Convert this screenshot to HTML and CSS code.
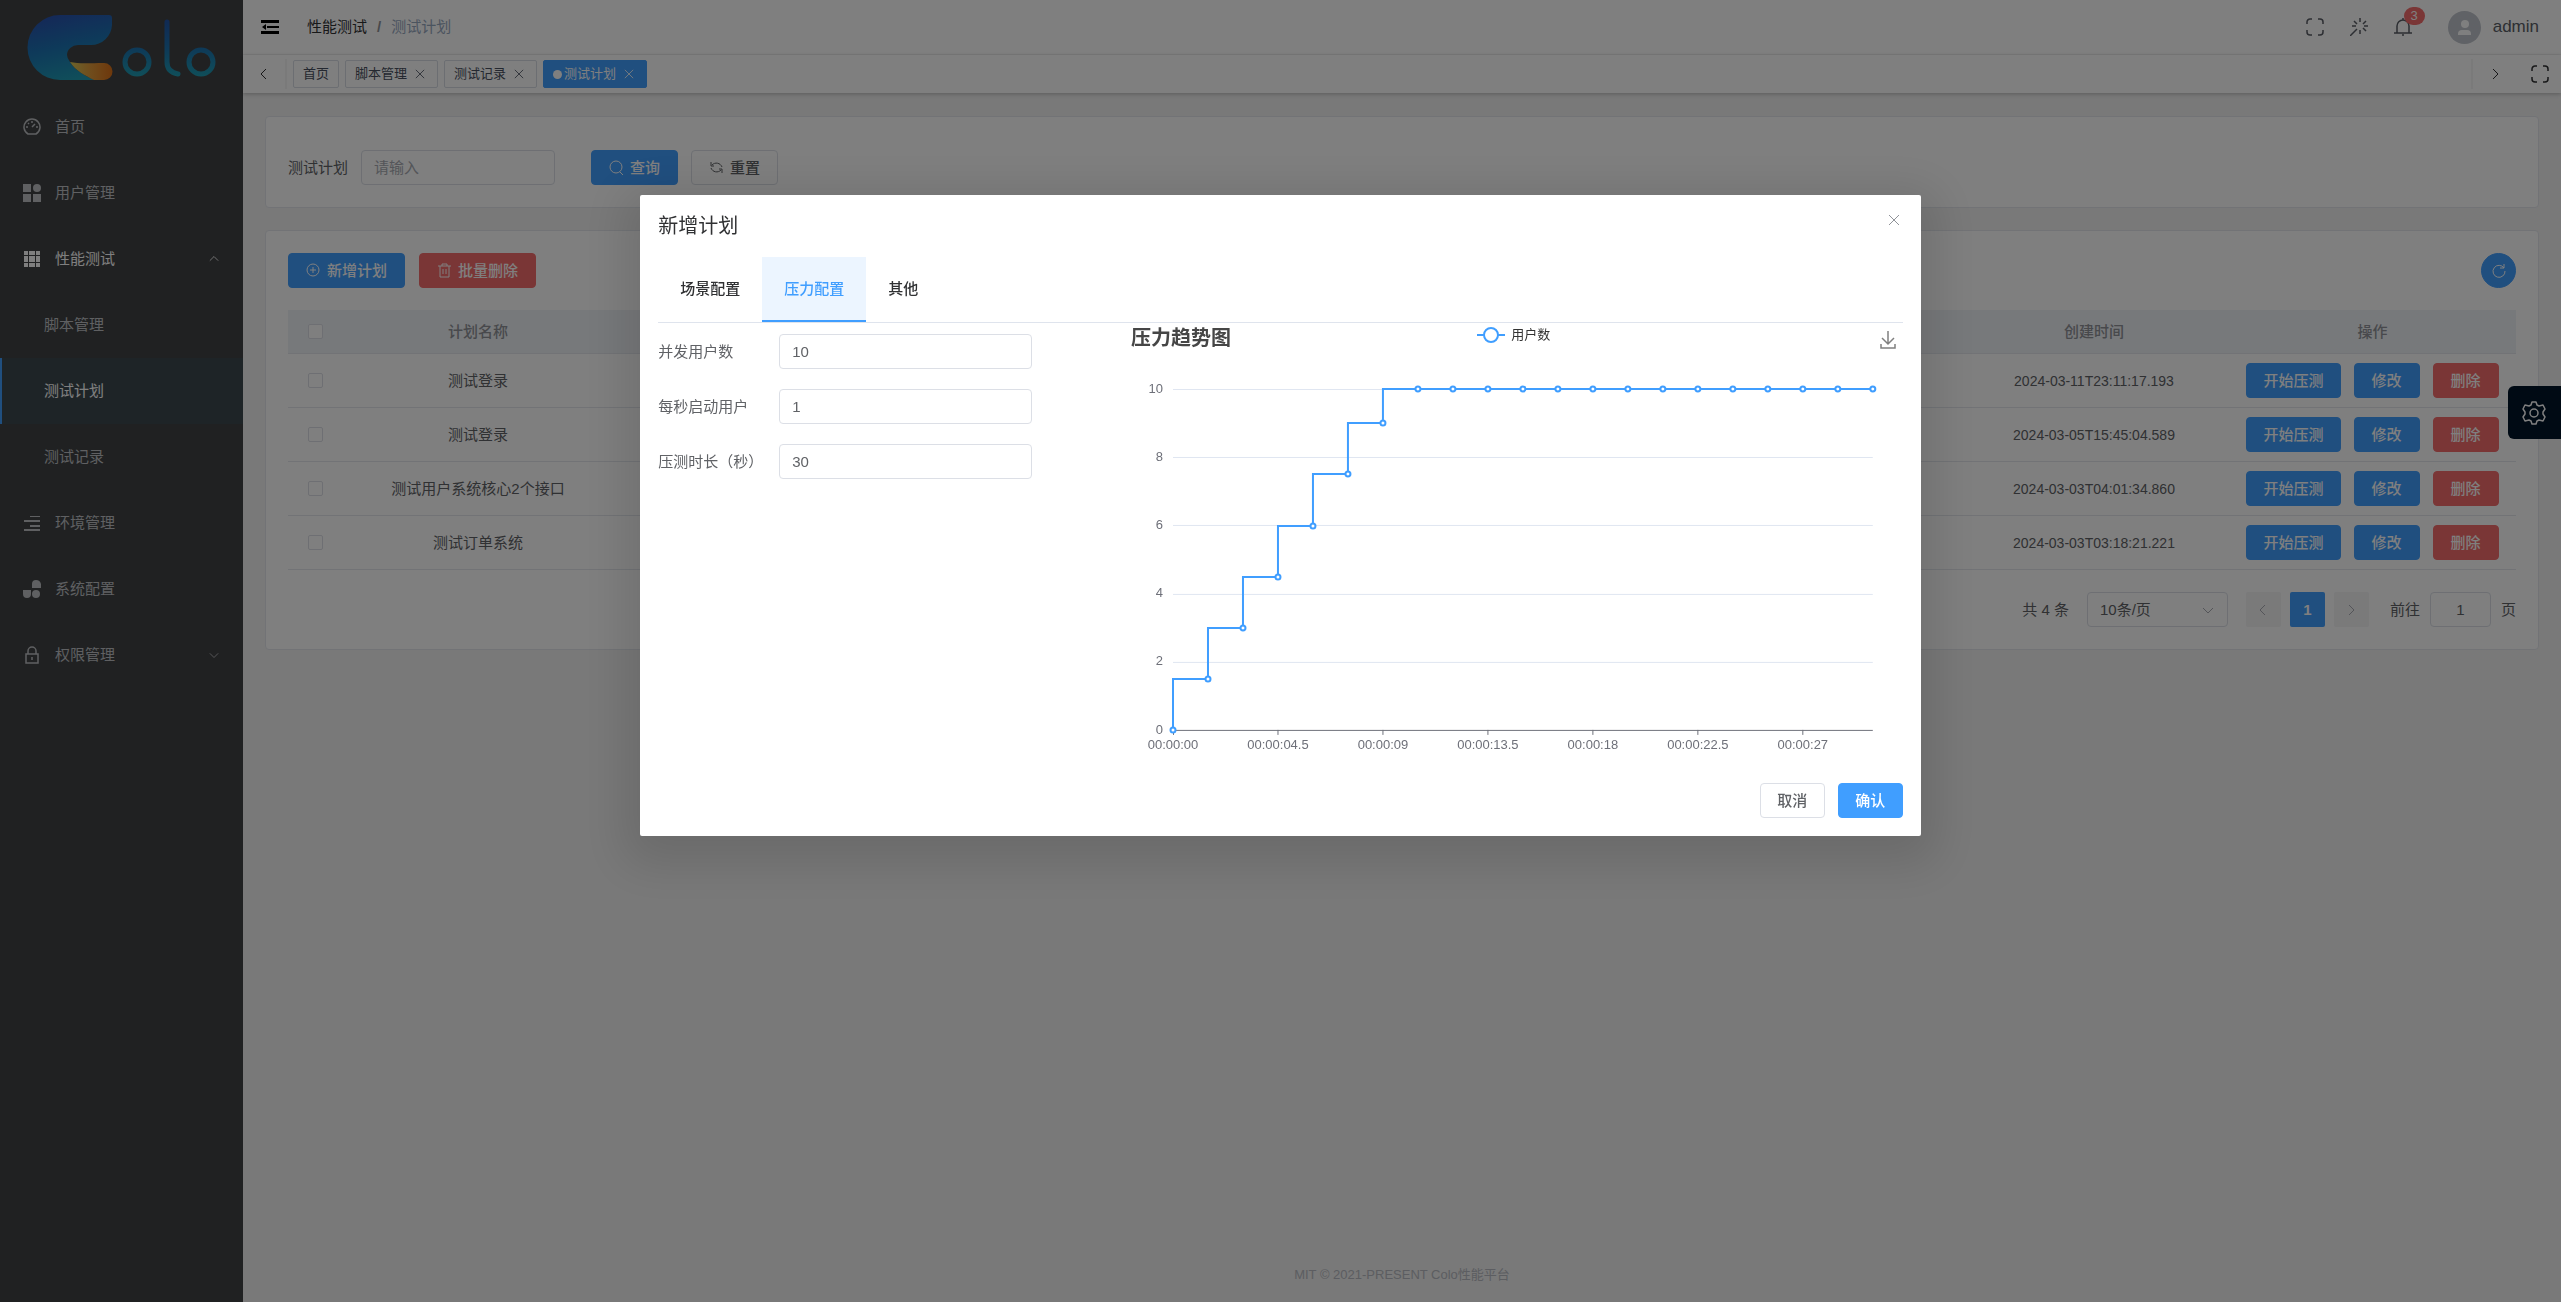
FILE: index.html
```html
<!DOCTYPE html>
<html lang="zh-CN">
<head>
<meta charset="utf-8">
<title>测试计划 - Colo性能平台</title>
<link rel="stylesheet" href="styles.css">
</head>
<body>
<svg class="sprite" aria-hidden="true">
  <symbol id="i-full" viewBox="0 0 18 18"><path d="M1 6V4a3 3 0 0 1 3-3h2M12 1h2a3 3 0 0 1 3 3v2M17 12v2a3 3 0 0 1-3 3h-2M6 17H4a3 3 0 0 1-3-3v-2"/></symbol>
  <symbol id="i-close" viewBox="0 0 12 12"><path d="M1 1l10 10M11 1L1 11"/></symbol>
  <symbol id="i-left" viewBox="0 0 12 12"><path d="M8 1L3 6l5 5"/></symbol>
  <symbol id="i-right" viewBox="0 0 12 12"><path d="M4 1l5 5-5 5"/></symbol>
  <symbol id="i-down" viewBox="0 0 12 12"><path d="M1 4l5 5 5-5"/></symbol>
  <symbol id="i-up" viewBox="0 0 12 12"><path d="M1 8l5-5 5 5"/></symbol>
</svg>
<div class="app">
  <aside class="sidebar">
    <svg class="logo" viewBox="0 0 243 94" role="img" aria-label="Colo">
      <defs>
        <linearGradient id="g1" x1="0.2" y1="0" x2="0.5" y2="1"><stop offset="0" stop-color="#2a50b0"/><stop offset="0.5" stop-color="#1c74b4"/><stop offset="1" stop-color="#209cb4"/></linearGradient>
        <linearGradient id="g2"><stop offset="0" stop-color="#d8c858"/><stop offset="0.5" stop-color="#e09838"/><stop offset="1" stop-color="#dc7018"/></linearGradient>
        <linearGradient id="g3" gradientUnits="userSpaceOnUse" x1="0" y1="20" x2="0" y2="78"><stop offset="0" stop-color="#2054a8"/><stop offset="0.5" stop-color="#1c74b0"/><stop offset="1" stop-color="#20a0b4"/></linearGradient>
      </defs>
      <path fill="url(#g1)" d="M112 18q0-3-3-3H60a32 32 0 0 0 0 65h35C85 76 75 70 70 62q-3-4-3-7a11 10 0 0 1 11-10h13a21 21 0 0 0 21-20z"/>
      <path fill="url(#g2)" d="M70 62c9 2 20 1 34 1a8 8 0 0 1 0 17H94C84 75 76 71 70 62z"/>
      <g fill="none" stroke="url(#g3)" stroke-width="5" stroke-linecap="round"><circle cx="137" cy="62" r="12"/><path d="M167 22v40q0 10 11 12"/><circle cx="201" cy="62" r="12"/></g>
    </svg>
    <nav class="menu">
      <a class="item" href="#"><svg class="mi line" viewBox="0 0 18 18"><path d="M5 16a8 8 0 1 1 8 0zM9 9l3-3M9 3v2M3 9h2M13 9h2M5 5l1 1"/></svg>首页</a>
      <a class="item" href="#"><svg class="mi" viewBox="0 0 18 18"><path d="M0 0h8v8H0zM0 10h8v8H0zM10 10h8v8h-8z"/><circle cx="14" cy="4" r="4"/></svg>用户管理</a>
      <a class="item open" href="#"><svg class="mi" viewBox="0 0 18 18"><path d="M1 1h4v4H1zM6 1h6v4H6zM13 1h4v4h-4zM1 6h4v6H1zM6 6h6v6H6zM13 6h4v6h-4zM1 13h4v4H1zM6 13h6v4H6zM13 13h4v4h-4z"/></svg>性能测试<svg class="arrow"><use href="#i-up"/></svg></a>
      <a class="item sub" href="#">脚本管理</a>
      <a class="item sub active" href="#">测试计划</a>
      <a class="item sub" href="#">测试记录</a>
      <a class="item" href="#"><svg class="mi" viewBox="0 0 18 18"><path d="M7 2h10v1H7zM1 6h16v2H1zM7 11h10v2H7zM1 15h16v2H1z"/></svg>环境管理</a>
      <a class="item" href="#"><svg class="mi" viewBox="0 0 18 18"><path d="M9 8V4q0-4 4-4t5 4v4zM0 10h8v4q0 4-4 4t-4-4z"/><circle cx="13" cy="14" r="4"/></svg>系统配置</a>
      <a class="item" href="#"><svg class="mi line" viewBox="0 0 18 18"><path d="M3 8h12v9H3zM5 8V5a4 4 0 0 1 8 0v3M9 11v3"/></svg>权限管理<svg class="arrow"><use href="#i-down"/></svg></a>
    </nav>
  </aside>

  <div class="page">
    <header class="topbar">
      <button class="plain" aria-label="折叠菜单"><svg class="fold" viewBox="0 0 18 14"><path d="M0 0h18v3H0zM6 6h12v2H6zM0 11h18v3H0zM5 4v6L1 7z"/></svg></button>
      <nav class="crumbs"><a href="#">性能测试</a><span class="slash">/</span><span class="here">测试计划</span></nav>
      <div class="tools">
        <button class="plain" aria-label="全屏"><svg class="ic18"><use href="#i-full"/></svg></button>
        <button class="plain" aria-label="主题"><svg class="ic18" viewBox="0 0 18 18"><path d="M10 0v4M10 12v4M2 8h4M14 8h4M4 3l3 3M16 3l-3 3M13 10l3 3M7 11l-7 7"/></svg></button>
        <button class="plain bell" aria-label="通知"><svg class="ic18" viewBox="0 0 18 18"><path d="M0 15h18M3 15V8a6 6 0 0 1 12 0v7M8 17h2M9 0v2"/></svg><span class="badge">3</span></button>
        <button class="plain user"><svg class="avatar" viewBox="0 0 33 33"><circle cx="16.500" cy="16.500" r="16.500" fill="#c0c4cc"/><circle cx="17" cy="13" r="4" fill="#fff"/><path fill="#fff" d="M10 24v-1q0-4 4-4h5q4 0 4 4v1z"/></svg>admin</button>
      </div>
    </header>
    <div class="tagbar">
      <button class="plain edge" aria-label="向左"><svg class="ic12"><use href="#i-left"/></svg></button>
      <div class="tags">
        <a class="tag" href="#">首页</a>
        <a class="tag" href="#">脚本管理<svg class="x"><use href="#i-close"/></svg></a>
        <a class="tag" href="#">测试记录<svg class="x"><use href="#i-close"/></svg></a>
        <a class="tag on" href="#"><i class="dot"></i>测试计划<svg class="x"><use href="#i-close"/></svg></a>
      </div>
      <button class="plain edge right" aria-label="向右"><svg class="ic12"><use href="#i-right"/></svg></button>
      <button class="plain last" aria-label="内容全屏"><svg class="ic18"><use href="#i-full"/></svg></button>
    </div>

    <main class="content">
      <form class="card search">
        <label for="q">测试计划</label>
        <input class="input" id="q" type="text" placeholder="请输入">
        <div class="btns">
          <button class="btn primary" type="button"><svg viewBox="0 0 15 15"><circle cx="7" cy="7" r="6"/><path d="M11 12l3 3"/></svg>查询</button>
          <button class="btn" type="button"><svg viewBox="0 0 15 15"><path d="M3 5a6 6 0 0 1 10 2M2 2v4h3M12 10a6 6 0 0 1-10-2M13 13V9h-3"/></svg>重置</button>
        </div>
      </form>

      <section class="card list">
        <div class="bar">
          <button class="btn primary"><svg viewBox="0 0 15 15"><circle cx="7" cy="7" r="6"/><path d="M7 4v6M4 7h6"/></svg>新增计划</button>
          <button class="btn danger"><svg viewBox="0 0 15 15"><path d="M1 3h13M5 3V1h5v2M3 3v11h9V3M6 6v5M9 6v5"/></svg>批量删除</button>
          <button class="btn primary round" aria-label="刷新"><svg viewBox="0 0 15 15"><path d="M13 5a6 6 0 1 0 1 3M13 1v4h-4"/></svg></button>
        </div>
        <table>
          <colgroup><col class="c-check"><col class="c-text"><col><col class="c-text"><col class="c-ops"></colgroup>
          <thead><tr><th><input type="checkbox" aria-label="全选"></th><th>计划名称</th><th></th><th>创建时间</th><th>操作</th></tr></thead>
          <tbody>
            <tr><td><input type="checkbox" aria-label="选择"></td><td>测试登录</td><td></td><td class="time">2024-03-11T23:11:17.193</td><td><div class="ops"><button class="btn primary">开始压测</button><button class="btn primary">修改</button><button class="btn danger">删除</button></div></td></tr>
            <tr><td><input type="checkbox" aria-label="选择"></td><td>测试登录</td><td></td><td class="time">2024-03-05T15:45:04.589</td><td><div class="ops"><button class="btn primary">开始压测</button><button class="btn primary">修改</button><button class="btn danger">删除</button></div></td></tr>
            <tr><td><input type="checkbox" aria-label="选择"></td><td>测试用户系统核心2个接口</td><td></td><td class="time">2024-03-03T04:01:34.860</td><td><div class="ops"><button class="btn primary">开始压测</button><button class="btn primary">修改</button><button class="btn danger">删除</button></div></td></tr>
            <tr><td><input type="checkbox" aria-label="选择"></td><td>测试订单系统</td><td></td><td class="time">2024-03-03T03:18:21.221</td><td><div class="ops"><button class="btn primary">开始压测</button><button class="btn primary">修改</button><button class="btn danger">删除</button></div></td></tr>
          </tbody>
        </table>
        <div class="pager">
          <span>共 4 条</span>
          <span class="pick"><select class="input" aria-label="每页条数"><option>10条/页</option></select><svg class="ic12"><use href="#i-down"/></svg></span>
          <div class="pages">
            <button class="pg" disabled aria-label="上一页"><svg class="ic12"><use href="#i-left"/></svg></button>
            <button class="pg cur">1</button>
            <button class="pg" disabled aria-label="下一页"><svg class="ic12"><use href="#i-right"/></svg></button>
          </div>
          <div class="jump"><label for="goto">前往</label><input class="input" id="goto" type="text" value="1"><span>页</span></div>
        </div>
      </section>
    </main>
    <footer>MIT © 2021-PRESENT Colo性能平台</footer>
  </div>
  <button class="setting" aria-label="系统设置"><svg viewBox="0 0 24 24"><path d="M9 4l1-3h4l1 3 2 1 4-1 2 4-2 3v2l2 3-2 4-4-1-2 1-1 3h-4l-1-3-2-1-4 1-2-4 2-3v-2L1 8l2-4 4 1z"/><circle cx="12" cy="12" r="4"/></svg></button>
</div>

<div class="overlay">
  <section class="dialog" role="dialog" aria-modal="true" aria-labelledby="dlg">
    <header class="dhead"><h2 id="dlg">新增计划</h2><button class="plain" aria-label="关闭"><svg class="ic12"><use href="#i-close"/></svg></button></header>
    <div class="tabs" role="tablist">
      <button class="tab" role="tab">场景配置</button>
      <button class="tab sel" role="tab" aria-selected="true">压力配置</button>
      <button class="tab" role="tab">其他</button>
    </div>
    <div class="dbody">
      <form class="fields">
        <label for="f1">并发用户数</label><input class="input" id="f1" type="text" value="10">
        <label for="f2">每秒启动用户</label><input class="input" id="f2" type="text" value="1">
        <label for="f3">压测时长（秒）</label><input class="input" id="f3" type="text" value="30">
      </form>
      <figure class="chart">
        <figcaption>
          <h3>压力趋势图</h3>
          <span class="legend"><svg viewBox="0 0 28 16"><path d="M0 8h28"/><circle cx="14" cy="8" r="7"/></svg>用户数</span>
          <button class="plain save" aria-label="下载"><svg viewBox="0 0 16 18"><path d="M8 0v13M2 7l6 6 6-6M1 13v4h14v-4"/></svg></button>
        </figcaption>
        <svg class="plot" viewBox="0 0 778 392">
          <g class="grid"><path d="M48 27.500H748M48 95.500H748M48 163.500H748M48 232.500H748M48 300.500H748"/></g>
          <path class="axis" d="M48 368.500H748M48.500 368v5M153 368v5M258 368v5M363 368v5M468 368v5M573 368v5M678 368v5"/>
          <g class="ylab"><text x="38" y="31">10</text><text x="38" y="99">8</text><text x="38" y="167">6</text><text x="38" y="235">4</text><text x="38" y="303">2</text><text x="38" y="372">0</text></g>
          <g class="xlab"><text x="48" y="387">00:00:00</text><text x="153" y="387">00:00:04.5</text><text x="258" y="387">00:00:09</text><text x="363" y="387">00:00:13.5</text><text x="468" y="387">00:00:18</text><text x="573" y="387">00:00:22.5</text><text x="678" y="387">00:00:27</text></g>
          <path class="serie" d="M48 368V317H83V266H118V215H153V164H188V112H223V61H258V27H748"/>
          <g class="dots"><circle cx="48" cy="368" r="2.500"/><circle cx="83" cy="317" r="2.500"/><circle cx="118" cy="266" r="2.500"/><circle cx="153" cy="215" r="2.500"/><circle cx="188" cy="164" r="2.500"/><circle cx="223" cy="112" r="2.500"/><circle cx="258" cy="61" r="2.500"/><circle cx="293" cy="27" r="2.500"/><circle cx="328" cy="27" r="2.500"/><circle cx="363" cy="27" r="2.500"/><circle cx="398" cy="27" r="2.500"/><circle cx="433" cy="27" r="2.500"/><circle cx="468" cy="27" r="2.500"/><circle cx="503" cy="27" r="2.500"/><circle cx="538" cy="27" r="2.500"/><circle cx="573" cy="27" r="2.500"/><circle cx="608" cy="27" r="2.500"/><circle cx="643" cy="27" r="2.500"/><circle cx="678" cy="27" r="2.500"/><circle cx="713" cy="27" r="2.500"/><circle cx="748" cy="27" r="2.500"/></g>
        </svg>
      </figure>
    </div>
    <footer class="dfoot"><button class="btn">取消</button><button class="btn primary">确认</button></footer>
  </section>
</div>
</body>
</html>
```
FILE: styles.css
```css
* { box-sizing: border-box; }
body {
  margin: 0;
  font: 15px/20px "Liberation Sans", "Noto Sans CJK SC", sans-serif;
  color: #606266;
  background: #f2f2f2;
}
button, input, select { font: inherit; color: inherit; margin: 0; }
a { color: inherit; text-decoration: none; }
h2, h3, figure { margin: 0; }
svg { fill: none; stroke: currentColor; display: block; flex: none; }
.sprite { width: 0; height: 0; position: absolute; }
.plain { display: flex; align-items: center; background: none; border: 0; padding: 0; }
.ic12 { width: 12px; height: 12px; }
.ic18 { width: 18px; height: 18px; }

.app { display: grid; grid-template-columns: 243px minmax(0, 1fr); min-height: 100vh; }

/* sidebar */
.sidebar { background: #414345; color: #bfc1c4; }
.logo { width: 100%; stroke: none; }
.item { display: flex; align-items: center; height: 66px; padding: 0 24px 0 23px; gap: 14px; }
.item.open { color: #fff; }
.sub { padding-left: 44px; }
.sub.active { color: #fff; background: #3d494f; box-shadow: inset 2px 0 #409eff; }
.mi { width: 18px; height: 18px; fill: currentColor; stroke: none; }
.mi.line { fill: none; stroke: currentColor; stroke-width: 1.5; }
.arrow { width: 10px; height: 12px; margin-left: auto; }

/* top bar */
.page { display: flex; flex-direction: column; }
.topbar { display: flex; align-items: center; height: 55px; padding: 0 22px 0 18px; background: #fff; color: #303133; border-bottom: 1px solid #f6f6f6; }
.fold { width: 18px; height: 14px; fill: #000; stroke: none; }
.crumbs { display: flex; gap: 10px; margin-left: 28px; }
.slash { color: #909399; font-weight: bold; }
.here { color: #97a8be; }
.tools { display: flex; align-items: center; gap: 26px; margin-left: auto; color: #5a5e66; }
.tools .ic18 { stroke-width: 1.5; }
.bell { position: relative; }
.badge { position: absolute; left: 10px; top: -11px; width: 21px; height: 18px; border-radius: 9px; background: #f56c6c; color: #fff; font-size: 13px; line-height: 18px; text-align: center; }
.user { gap: 12px; margin-left: 10px; font-size: 17px; }
.avatar { width: 33px; height: 33px; stroke: none; }

/* visited pages */
.tagbar { display: flex; height: 38px; align-items: center; background: #fff; color: #303133; box-shadow: 0 1px 4px rgba(0, 0, 0, .25); position: relative; }
.tagbar .ic18 { stroke-width: 1.5; }
.edge { width: 44px; height: 30px; padding-left: 15px; border-right: 2px solid #f4f4f4; }
.edge.right { width: 60px; padding-left: 16px; border: 0; border-left: 2px solid #f4f4f4; }
.last { padding-right: 12px; }
.tags { display: flex; flex: 1; gap: 6px; padding-left: 6px; }
.tag { display: flex; align-items: center; height: 28px; padding: 0 9px; border: 1px solid #d8dce5; border-radius: 2px; font-size: 13px; color: #495060; background: #fff; }
.tag .x { width: 10px; height: 10px; margin: 0 3px 0 8px; }
.tag.on { background: #409eff; border-color: #409eff; color: #fff; }
.dot { width: 9px; height: 9px; margin-right: 2px; border-radius: 50%; background: #fff; }

/* content */
.content { display: flex; flex-direction: column; gap: 22px; padding: 23px 22px 22px; }
.card { background: #fff; border: 1px solid #e4e7ed; border-radius: 4px; padding: 22px; }
.search { display: flex; align-items: center; padding-top: 33px; }
.input { height: 35px; padding: 0 12px; border: 1px solid #dcdfe6; border-radius: 4px; background: #fff; outline: 0; min-width: 0; }
.input::placeholder { color: #a8abb2; }
.search .input { width: 194px; margin-left: 13px; }
.btns { display: flex; gap: 13px; margin-left: 36px; }
.btn { display: flex; align-items: center; justify-content: center; gap: 6px; height: 35px; padding: 0 17px; border: 1px solid #dcdfe6; border-radius: 4px; background: #fff; font-weight: 500; white-space: nowrap; }
.btn svg { width: 15px; height: 15px; }
.primary { background: #409eff; border-color: #409eff; color: #fff; }
.danger { background: #f56c6c; border-color: #f56c6c; color: #fff; }
.bar { display: flex; gap: 14px; margin-bottom: 22px; }
.round { width: 35px; padding: 0; border-radius: 50%; margin-left: auto; }

table { width: 100%; table-layout: fixed; border-collapse: separate; border-spacing: 0; text-align: center; }
.c-check { width: 55px; }
.c-text { width: 270px; }
.c-ops { width: 287px; }
th { height: 44px; padding: 0; background: #eff2f6; color: #909399; font-weight: 500; border-bottom: 1px solid #e4e7ed; }
td { height: 54px; padding: 0; border-bottom: 1px solid #e4e7ed; }
.time { font-size: 14px; }
input[type=checkbox] { appearance: none; display: block; width: 15px; height: 15px; margin: 0 auto; border: 1px solid #dcdfe6; border-radius: 2px; background: #fff; }
.ops { display: flex; justify-content: center; gap: 13px; }
.ops .btn { padding: 0 16px; min-width: 66px; }

.pager { display: flex; align-items: center; justify-content: flex-end; gap: 18px; margin-top: 22px; }
.pick { display: grid; align-items: center; }
.pick > * { grid-area: 1 / 1; }
.pick .ic12 { justify-self: end; margin-right: 14px; color: #a8abb2; }
.pick select { width: 141px; appearance: none; }
.pages { display: flex; gap: 9px; }
.pg { display: grid; place-items: center; width: 35px; height: 35px; padding: 0; border: 0; border-radius: 2px; background: #f4f4f5; color: #a8abb2; }
.cur { background: #409eff; color: #fff; font-weight: bold; }
.jump { display: flex; align-items: center; gap: 10px; margin-left: 3px; }
.jump .input { width: 61px; text-align: center; }
.page > footer { margin-top: auto; height: 55px; line-height: 55px; text-align: center; font-size: 13px; color: #b8bbc2; }

.setting { position: fixed; right: 0; top: 386px; width: 53px; height: 53px; padding: 0 14px; border: 0; border-radius: 6px 0 0 6px; background: #001529; color: #fff; }
.setting svg { width: 24px; height: 24px; stroke-width: 1.5; stroke-linejoin: round; }

/* dialog */
.overlay { position: fixed; inset: 0; overflow: auto; background: rgba(0, 0, 0, .5); }
.dialog { width: 50%; margin: 15vh auto 50px; padding: 18px; background: #fff; border-radius: 2px; box-shadow: 0 12px 48px 16px rgba(0, 0, 0, .12); }
.dhead { display: flex; justify-content: space-between; height: 44px; }
.dhead h2 { font-size: 20px; line-height: 26px; font-weight: 400; color: #303133; }
.dhead .plain { height: 14px; padding-right: 3px; color: #909399; }
.tabs { display: flex; height: 66px; border-bottom: 1px solid #dfe4ed; }
.tab { padding: 0 22px; border: 0; border-bottom: 2px solid transparent; background: none; color: #303133; font-weight: 500; }
.tab.sel { color: #409eff; background: #ecf5ff; border-color: #409eff; }
.dbody { display: grid; grid-template-columns: 3fr 5fr; }
.fields { display: grid; grid-template-columns: 121px 1fr; width: 80%; row-gap: 20px; padding-top: 11px; align-content: start; align-items: center; }
figcaption { display: grid; grid-template-columns: 1fr auto 1fr; align-items: start; height: 39px; padding-top: 1px; }
.chart h3 { padding-left: 6px; font-size: 20px; line-height: 28px; color: #464646; }
.legend { display: flex; align-items: center; gap: 6px; font-size: 13px; line-height: 22px; color: #333; }
.legend svg { width: 28px; height: 16px; stroke: #409eff; stroke-width: 2; fill: #fff; }
.save { justify-self: end; padding: 7px 7px 0 0; color: #808080; }
.save svg { width: 16px; height: 18px; stroke-width: 1.5; }
.plot { width: 100%; overflow: visible; }
.plot text { font-size: 13px; fill: #6e7079; stroke: none; }
.grid { stroke: #e0e6f1; }
.axis { stroke: #6e7079; }
.ylab { text-anchor: end; }
.xlab { text-anchor: middle; }
.serie { stroke: #409eff; stroke-width: 2; }
.dots { stroke: #409eff; stroke-width: 2; fill: #fff; }
.dfoot { display: flex; justify-content: flex-end; gap: 13px; margin-top: 29px; }
.dfoot .btn { padding: 0 16px; min-width: 65px; }
```
